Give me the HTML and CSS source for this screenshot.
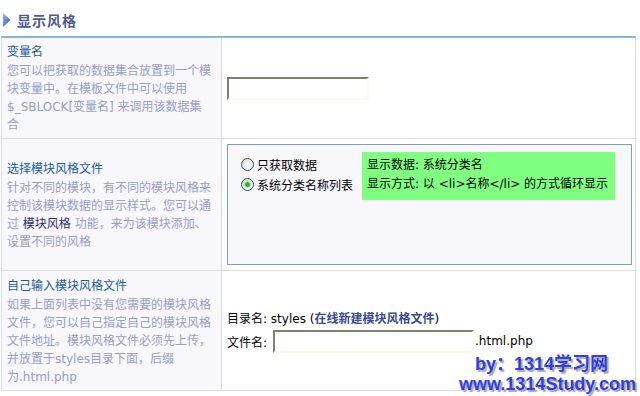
FILE: index.html
```html
<!DOCTYPE html>
<html lang="zh-CN">
<head>
  <meta charset="UTF-8">
  <title>显示风格</title>
  <link rel="stylesheet" href="styles.css">
</head>
<body>
<div class="page">
  <h2 class="section-title">
    <svg class="arrow" width="8" height="14" viewBox="0 0 8 14">
      <defs>
        <linearGradient id="arr" x1="0" y1="0" x2="1" y2="1">
          <stop offset="0" stop-color="#9dbcf0"/>
          <stop offset="1" stop-color="#2a4fae"/>
        </linearGradient>
      </defs>
      <path d="M0 0 L7.5 7 L0 14 Z" fill="url(#arr)"/>
    </svg>
    显示风格
  </h2>

  <div class="form">
    <div class="row">
      <div class="label">
        <div class="label-name">变量名</div>
        <div class="label-desc">您可以把获取的数据集合放置到一个模块变量中。在模板文件中可以使用$_SBLOCK[变量名] 来调用该数据集合</div>
      </div>
      <div class="field">
        <input type="text" class="text-input short">
      </div>
    </div>

    <div class="row">
      <div class="label middle">
        <div class="label-name">选择模块风格文件</div>
        <div class="label-desc">针对不同的模块，有不同的模块风格来控制该模块数据的显示样式。您可以通过 <b class="inline-link">模块风格</b> 功能，来为该模块添加、设置不同的风格</div>
      </div>
      <div class="field boxed">
        <div class="style-box">
          <div class="radio-list">
            <label class="radio"><input type="radio" name="tpl">只获取数据</label>
            <label class="radio"><input type="radio" name="tpl" checked>系统分类名称列表</label>
          </div>
          <div class="preview">
            显示数据: 系统分类名<br>
            显示方式: 以 &lt;li&gt;名称&lt;/li&gt; 的方式循环显示
          </div>
        </div>
      </div>
    </div>

    <div class="row">
      <div class="label last">
        <div class="label-name">自己输入模块风格文件</div>
        <div class="label-desc">如果上面列表中没有您需要的模块风格文件，您可以自己指定自己的模块风格文件地址。模块风格文件必须先上传，并放置于styles目录下面，后缀为.html.php</div>
      </div>
      <div class="field">
        <div class="dir-line">目录名: styles (<a class="new-link">在线新建模块风格文件</a>)</div>
        <div class="file-line"><span>文件名:</span><input type="text" class="text-input long"><span>.html.php</span></div>
      </div>
    </div>
  </div>

  <div class="watermark">
    <div class="wm-by">by：1314学习网</div>
    <div class="wm-url">www.1314Study.com</div>
  </div>
</div>
</body>
</html>
```

FILE: styles.css
```css
body {
    margin: 0;
    background: #ffffff;
    font-family: "DejaVu Sans", "Noto Sans CJK SC", sans-serif;
    font-size: 12px;
    color: #000;
}

.page {
    position: relative;
    width: 640px;
    height: 396px;
    overflow: hidden;
}

.section-title {
    display: flex;
    align-items: center;
    height: 32px;
    margin: 0;
    padding: 4px 0 0 3px;
    font-family: "Noto Sans CJK SC", sans-serif;
    font-size: 14px;
    font-weight: bold;
    letter-spacing: 1px;
    color: #4d5993;
}

.arrow {
    margin-right: 6px;
}

.form {
    width: 633px;
    margin-left: 1px;
    border-top: 2px solid #86b8d6;
    border-left: 1px solid #dcdce6;
    border-right: 1px solid #dcdce6;
}

.row {
    display: grid;
    grid-template-columns: 220px 1fr;
    border-bottom: 1px solid #dcdce6;
}

.label {
    background: #f7f7fc;
    border-right: 1px solid #dcdce6;
    padding: 5px 9px 4px 5px;
    line-height: 18px;
}
.label.middle {
    display: flex;
    flex-direction: column;
    justify-content: center;
}
.label.last {
    padding-top: 6px;
}

.label-name {
    color: #1c5aa0;
    margin-bottom: 1px;
}

.label-desc {
    color: #989dc6;
}

.inline-link {
    font-weight: normal;
    color: #2b2d6e;
}

.field {
    display: flex;
    flex-direction: column;
    justify-content: center;
    padding: 0 3px 0 5px;
}
.field.boxed {
    padding-top: 5px;
    padding-bottom: 5px;
}

.text-input {
    box-sizing: border-box;
    height: 23px;
    margin: 0;
    border: 2px solid;
    border-color: #848070 #fff8ee #fff8ee #848070;
    background: #fff;
}
.text-input.short {
    width: 142px;
}
.text-input.long {
    width: 201px;
    margin: 0 1px 0 6px;
}

.style-box {
    display: flex;
    align-items: flex-start;
    height: 112px;
    padding: 7px 0 0 13px;
    border: 1px solid #7d9ec0;
    background: #f7f7fc;
}

.radio-list {
    width: 121px;
    padding-top: 2px;
}

.radio {
    display: flex;
    align-items: center;
    height: 20px;
    white-space: nowrap;
}

.radio input {
    appearance: none;
    -webkit-appearance: none;
    width: 13px;
    height: 13px;
    margin: 0 3px 0 0;
    border: 1px solid #1c5180;
    border-radius: 50%;
    background: radial-gradient(circle at 65% 65%, #ffffff 0, #f2f1ea 40%, #d6d3c8 100%);
}
.radio input:checked {
    background: radial-gradient(circle, #26a626 0, #3cbc3c 2px, #9be09b 3px, rgba(255,255,255,0) 3.6px),
                radial-gradient(circle at 65% 65%, #ffffff 0, #f2f1ea 40%, #d6d3c8 100%);
}

.preview {
    box-sizing: border-box;
    width: 253px;
    padding: 4px 5px 6px;
    line-height: 19px;
    background: #80ff80;
    white-space: nowrap;
}

.dir-line {
    line-height: 18px;
    margin-bottom: 2px;
}

.new-link {
    color: #3a4990;
    font-weight: bold;
    font-family: "Noto Sans CJK SC", sans-serif;
}

.file-line {
    display: flex;
    align-items: center;
}

.watermark {
    position: absolute;
    left: 459px;
    top: 354px;
    font-family: "Liberation Sans", "Noto Sans CJK SC", sans-serif;
    font-size: 18px;
    font-weight: bold;
    line-height: 20px;
    color: #2f3fe2;
    text-shadow: 2px 2px 1px #a8a8b0;
    white-space: nowrap;
}

.wm-by {
    padding-left: 16px;
}
```
